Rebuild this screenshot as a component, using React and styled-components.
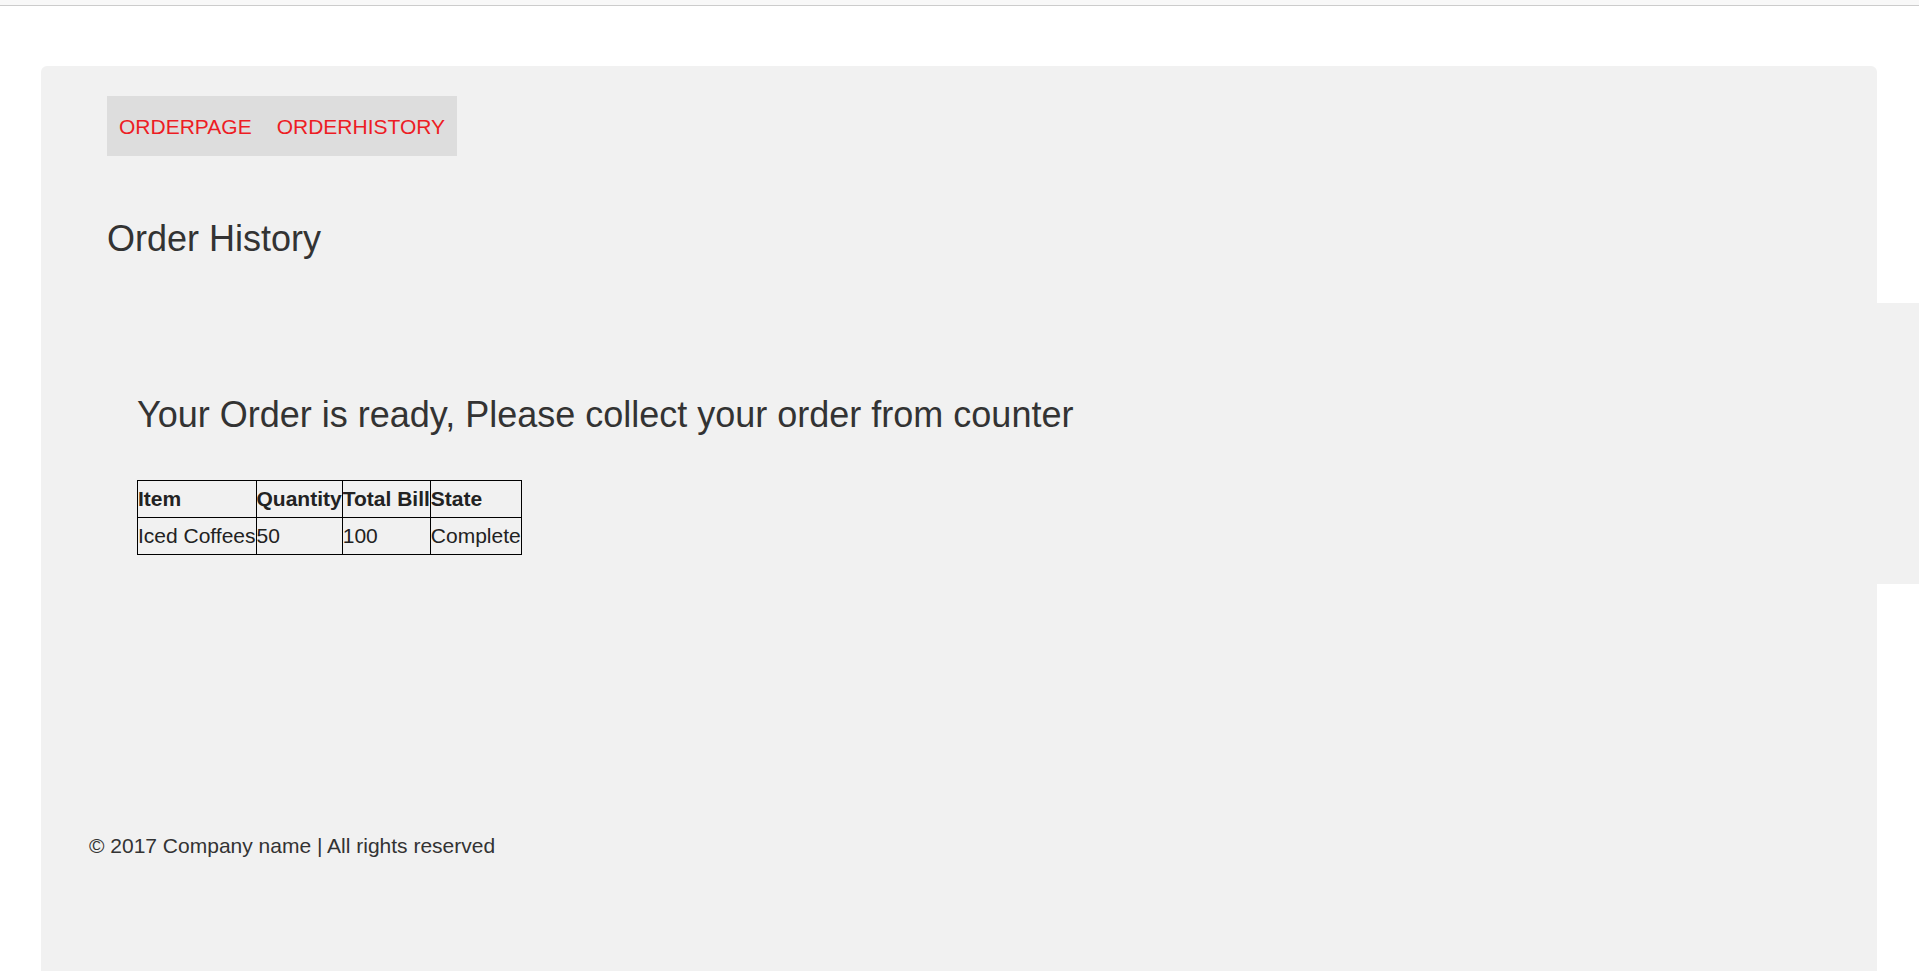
import React from "react";
import styled, { createGlobalStyle } from "styled-components";

const GlobalStyle = createGlobalStyle`
  html, body {
    margin: 0;
    padding: 0;
    background: #fff;
    overflow-x: hidden;
  }
  body {
    font-family: "Liberation Sans", Arial, sans-serif;
    font-size: 21px;
    line-height: 30px;
    color: #333;
  }
`;

const orders = [
  { item: "Iced Coffees", quantity: 50, bill: 100, state: "Complete" },
];

const App = () => {
  return (
    <>
      <GlobalStyle />
      <TopBar />
      <Page>
        <Panel>
          <Nav>
            <NavLink href="#">ORDERPAGE</NavLink>
            <NavLink href="#">ORDERHISTORY</NavLink>
          </Nav>
          <Title>Order History</Title>
          <Ready>
            <Title as="h2" className="ready">
              Your Order is ready, Please collect your order from counter
            </Title>
            <Table>
              <thead>
                <tr>
                  <th>Item</th>
                  <th>Quantity</th>
                  <th>Total Bill</th>
                  <th>State</th>
                </tr>
              </thead>
              <tbody>
                {orders.map((o) => (
                  <tr key={o.item}>
                    <td>{o.item}</td>
                    <td>{o.quantity}</td>
                    <td>{o.bill}</td>
                    <td>{o.state}</td>
                  </tr>
                ))}
              </tbody>
            </Table>
          </Ready>
          <Footer>© 2017 Company name | All rights reserved</Footer>
        </Panel>
      </Page>
    </>
  );
};

const TopBar = styled.div`
  height: 5px;
  background: #f8f8f8;
  border-bottom: 1px solid #ccc;
`;

const Page = styled.div`
  padding: 60px 42px 4px 41px;
`;

const Panel = styled.div`
  background: #f1f1f1;
  border-radius: 6px 6px 0 0;
  padding: 30px 66px 110px 66px;
`;

const Nav = styled.nav`
  display: inline-flex;
  align-items: center;
  box-sizing: border-box;
  gap: 25px;
  height: 60px;
  padding: 2px 12px 0;
  background: #dddddd;
`;

const NavLink = styled.a`
  color: #ed1c24;
  text-decoration: none;
  font-size: 21px;
`;

const Title = styled.h2`
  margin: 63px 0 0;
  font-size: 36px;
  font-weight: 400;
  line-height: 40px;
  color: #333;

  &.ready {
    margin: 0;
  }
`;

const Ready = styled.section`
  margin: 44px -108px 0 0;
  padding: 92px 0 29px 30px;
  background: #f1f1f1;
`;

const Table = styled.table`
  margin-top: 45px;
  border-collapse: collapse;
  color: #222;

  th,
  td {
    border: 1px solid #000;
    padding: 3px 0;
    text-align: left;
    line-height: 30px;
  }
  th {
    font-weight: 700;
  }
`;

const Footer = styled.footer`
  margin: 247px 0 0 -18px;
`;

export default App;
